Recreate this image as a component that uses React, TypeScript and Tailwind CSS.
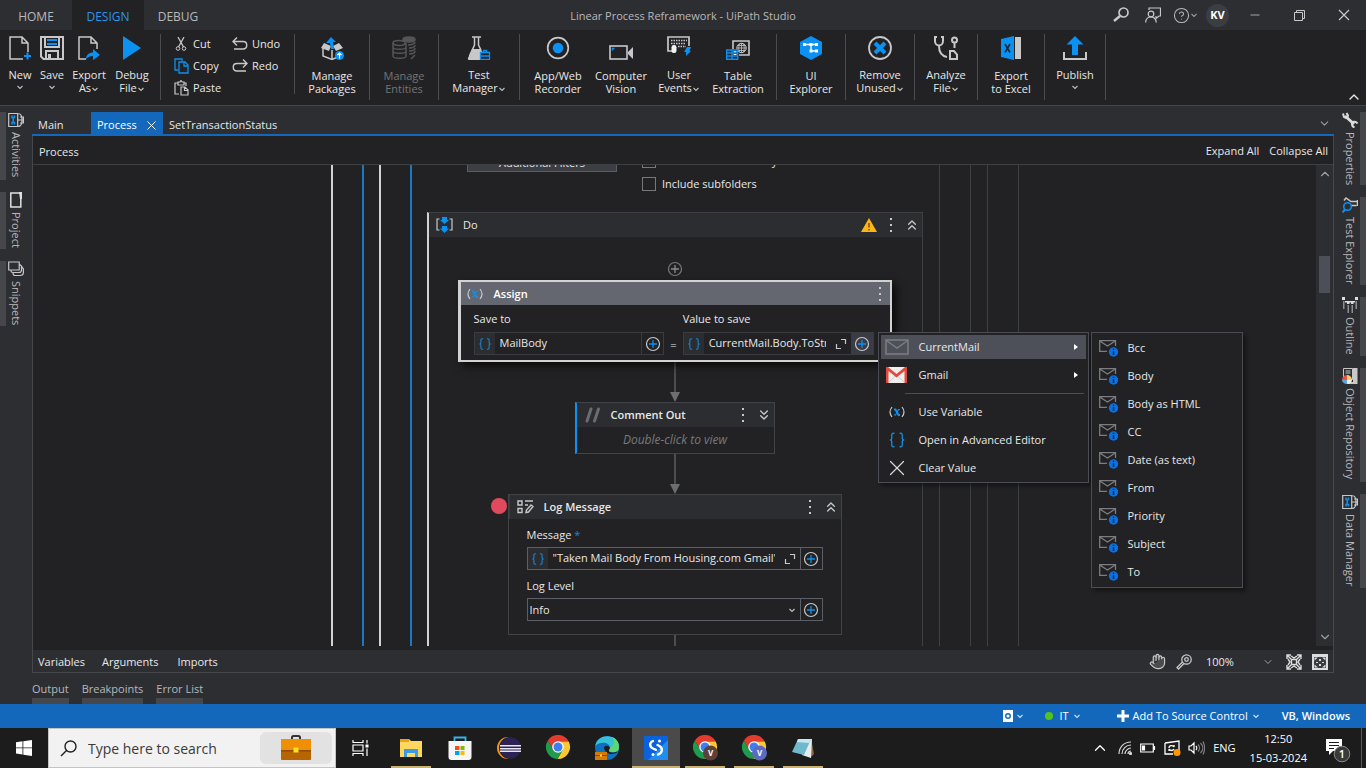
import React, { useState } from 'react';
import { Braces, ChevronDown, ChevronUp, ChevronsDown, ChevronsUp, CircleHelp, Hand, Minus, X } from 'lucide-react';

interface IconProps {
  className?: string;
}

const GREY = '#c8c8c8';
const BLUE = '#0a91f2';

/* ---------- Ribbon icons ---------- */

const NewIcon = () => (
  <svg width="24" height="24" viewBox="0 0 24 24" fill="none" stroke={GREY} strokeWidth="1.5">
    <path d="M15 23H2V1h12l6 6v9M14 1v6h6" />
    <path d="M19.5 16.500v7M16 20h7" stroke={BLUE} strokeWidth="2" />
  </svg>
);

const SaveIcon = () => (
  <svg width="24" height="24" viewBox="0 0 24 24" fill="none" stroke={GREY} strokeWidth="2">
    <path d="M1 1h22v22H3.500L1 20.500zM5 1v10h14V1M6 23v-8h12v8" />
    <path d="M9.500 18v5" strokeWidth="3" />
    <path d="M7 4h10M7 8h10" stroke={BLUE} />
  </svg>
);

const ExportAsIcon = () => (
  <svg width="24" height="24" viewBox="0 0 24 24" fill="none" stroke={GREY} strokeWidth="1.500">
    <path d="M9 23H2V1h12l6 6v6M14 1v6h6" />
    <path d="M9 23c0-4 3-6.500 7-6.500v-3.500l7 6-7 5v-4c-3 0-5 1-7 3z" fill={BLUE} stroke="none" />
  </svg>
);

const PlayIcon = () => (
  <svg width="24" height="24" viewBox="0 0 24 24">
    <path d="M3 0l18 12L3 24z" fill={BLUE} />
  </svg>
);

const CutIcon = () => (
  <svg width="14" height="14" viewBox="0 0 14 14" fill="none" stroke={GREY}>
    <path d="M4 0l5.500 10M10 0L4.500 10" strokeWidth="1.300" />
    <circle cx="4" cy="11.500" r="1.800" />
    <circle cx="10" cy="11.500" r="1.800" />
  </svg>
);

const CopyIcon = () => (
  <svg width="15" height="16" viewBox="0 0 15 16" fill="none" stroke={BLUE} strokeWidth="1.300">
    <path d="M4 12H1V1h7v2M5 4h6l3 3v8H5zM10 4v4h4" />
  </svg>
);

const PasteIcon = () => (
  <svg width="15" height="16" viewBox="0 0 15 16" fill="none" stroke={GREY} strokeWidth="1.200">
    <path d="M5 14H1V3h3M10 3h2v3M4 2h2l1-1.500L8 2h2v3H4z" />
    <path d="M7 7h4l3 3v5H7zM10.500 7v3.500H14" />
  </svg>
);

const UndoIcon = ({ className }: IconProps) => (
  <svg className={className} width="16" height="14" viewBox="0 0 16 14" fill="none" stroke={GREY} strokeWidth="1.400">
    <path d="M5 0.500L1 4.500l4 4M1 4.500h10c5 0 5 7.500 0 7.500H2" />
  </svg>
);

const PackagesIcon = () => (
  <svg width="24" height="24" viewBox="0 0 24 24">
    <path d="M3 12v8l9 3.500 7-3" fill="none" stroke={GREY} strokeWidth="1.500" />
    <path d="M12 14v9" stroke={GREY} strokeWidth="1.500" />
    <path d="M1 12l3-5 7 3-2 5zM23 12l-4-5-6 3 3 5z" fill={GREY} />
    <path d="M6 7l5-6 5 5h-3l1 7h-3L10 7z" fill={BLUE} />
    <circle cx="19.500" cy="19.500" r="4.500" fill={BLUE} />
    <path d="M19.500 22.500v-5.500M17.500 19l2-2 2 2" fill="none" stroke="#fff" strokeWidth="1.200" />
  </svg>
);

const EntitiesIcon = () => (
  <svg width="24" height="24" viewBox="0 0 24 24" fill="none" stroke="#555557" strokeWidth="1.500">
    <ellipse cx="17" cy="3.500" rx="6" ry="2.500" fill="#555557" />
    <path d="M23 6c0 2-4 3-7 3M23 9c0 2-3 3-6 3M23 12c0 2-3 3-6 3M23 15c0 2-3 3-6 3M19 23l4-4" />
    <ellipse cx="7" cy="7" rx="6" ry="2.500" />
    <path d="M1 7v13c0 3 13 3 13 0V7M1 11c0 3 13 3 13 0M1 15c0 3 13 3 13 0" />
  </svg>
);

const FlaskIcon = () => (
  <svg width="24" height="24" viewBox="0 0 24 24" fill="none">
    <path d="M5 1h9M7.500 1v8L2.500 20M11.500 1v8l2.500 5" stroke={GREY} strokeWidth="1.500" />
    <path d="M5 13h8l2 2v9H2c-1 0-1.500-1-1-2z" fill={GREY} />
    <path d="M13.500 16.500h9v7h-9zM13.500 20h9M16.500 16v-1.500h3V16" fill="#222224" stroke={BLUE} strokeWidth="1.300" />
  </svg>
);

const RecorderIcon = () => (
  <svg width="24" height="24" viewBox="0 0 24 24">
    <circle cx="12" cy="12" r="10.300" fill="none" stroke={GREY} strokeWidth="1.700" />
    <circle cx="12" cy="12" r="5.300" fill={BLUE} />
  </svg>
);

const CameraIcon = () => (
  <svg width="24" height="24" viewBox="0 0 24 24">
    <rect x="1" y="10" width="17" height="13" fill="none" stroke={GREY} strokeWidth="1.600" />
    <path d="M19 16l5-5v12l-5-5z" fill={GREY} />
    <path d="M3.500 14.500v-2h2" fill="none" stroke={BLUE} strokeWidth="1.500" />
  </svg>
);

const UserEventsIcon = () => (
  <svg width="24" height="24" viewBox="0 0 24 24">
    <path d="M5 15H1V1h21v9" fill="none" stroke={GREY} strokeWidth="1.700" />
    <path d="M4 4.500h16M4 7.500h14M11 10.500h8" stroke={GREY} strokeWidth="1.300" strokeDasharray="1.500 1" />
    <rect x="4.500" y="9" width="5" height="8" rx="2.300" fill="#f2f2f2" />
    <path d="M20 11h4l-1.500 4H24l-5 5v-4h-2z" fill={BLUE} />
  </svg>
);

const TableExtractionIcon = () => (
  <svg width="24" height="24" viewBox="0 0 24 24" fill="none">
    <path d="M7 13V5h16v14H13M7 5h16" stroke={GREY} strokeWidth="1.600" />
    <circle cx="15.500" cy="12" r="4.700" stroke={GREY} />
    <path d="M11 12h9M15.500 7v10M12 9.500h7M12 14.500h7M13.500 8c-1 3-1 5 0 8M17.500 8c1 3 1 5 0 8" stroke={GREY} strokeWidth="0.800" />
    <path d="M0.700 14h11v9.300H.7zM.7 17h11M.7 20h11M6 14v9" fill="#222224" stroke={BLUE} strokeWidth="1.400" />
    <path d="M7.500 15.700h3M7.500 18.500h3" stroke="#fff" />
  </svg>
);

const ExplorerIcon = () => (
  <svg width="24" height="24" viewBox="0 0 24 24">
    <path d="M12 0l11 6v12l-11 6-11-6V6z" fill={BLUE} />
    <path d="M5 8.500h12M12 8.500v6.500h5" fill="none" stroke="#fff" strokeWidth="1.300" />
    <path d="M4 7h3v3H4zM10.500 7h3v3h-3zM16 7h3v3h-3zM16 13.500h3v3h-3zM10.500 13.500h3v3h-3z" fill="#fff" />
  </svg>
);

const RemoveIcon = () => (
  <svg width="24" height="24" viewBox="0 0 24 24" fill="none">
    <circle cx="12" cy="12" r="11" stroke={GREY} strokeWidth="1.800" />
    <path d="M7 7l10 10M17 7L7 17" stroke={BLUE} strokeWidth="4" />
  </svg>
);

const AnalyzeIcon = () => (
  <svg width="24" height="24" viewBox="0 0 24 24" fill="none" stroke={GREY} strokeWidth="2">
    <path d="M3 1H1v4c0 6 8 6 8 0V1H7M5 10c0 6 3 10 8 11M20.500 7v5" />
    <circle cx="20.500" cy="4" r="2.500" />
    <path d="M16 15h4l3 3.500V23h-7z" />
  </svg>
);

const ExcelIcon = () => (
  <svg width="24" height="24" viewBox="0 0 24 24">
    <path d="M2 3l13-3v24L2 21z" fill={BLUE} />
    <path d="M16 1h6v22h-6z" fill={GREY} />
    <path d="M6 8l5 8.500M11 8l-5 8.500" stroke="#1d2a38" strokeWidth="1.700" />
  </svg>
);

const PublishIcon = () => (
  <svg width="24" height="24" viewBox="0 0 24 24">
    <path d="M12 0l8.500 8.500H15V19H9V8.500H3.500z" fill={BLUE} />
    <path d="M1 16v7h22v-7" fill="none" stroke={GREY} strokeWidth="2" />
  </svg>
);

/* ---------- Ribbon ---------- */

interface RibbonButtonProps {
  icon: React.ReactNode;
  lines: string[];
  menu?: boolean;
  disabled?: boolean;
  className?: string;
}

const SmallChevron = ({ className }: IconProps) => (
  <svg className={`inline-block opacity-80 ${className ?? ''}`} width="8" height="8" viewBox="0 0 8 8" fill="none" stroke="currentColor" strokeWidth="1.100">
    <path d="M1.500 3L4 5.500 6.500 3" />
  </svg>
);

const RibbonButton = ({ icon, lines, menu, disabled, className }: RibbonButtonProps) => (
  <button
    type="button"
    disabled={disabled}
    className={`flex flex-col items-center pt-0.5 leading-[13px] ${menu ? 'gap-2' : 'gap-[9px]'} ${
      disabled ? 'text-[#747476]' : 'text-[#e8e8e8]'
    } ${className ?? 'w-full'}`}
  >
    {icon}
    <span className="flex flex-col items-center whitespace-nowrap">
      {lines.map((line, i) => (
        <span key={line}>
          {line}
          {menu && i === 1 && <SmallChevron />}
        </span>
      ))}
      {menu && lines.length === 1 && <SmallChevron className="mt-0.5" />}
    </span>
  </button>
);

const EditButton = ({ icon, label }: { icon: React.ReactNode; label: string }) => (
  <button type="button" className="flex h-[22px] shrink-0 items-center gap-1 pb-0.5">
    <span className="flex w-4 justify-center">{icon}</span>
    {label}
  </button>
);

const Ribbon = () => (
  <div className="flex h-[76px] shrink-0 border-b border-[#46474b] bg-[#222224] pt-1 text-[#e8e8e8]">
    <div className="flex h-[66px] border-r border-[#4b4c50] pl-1 pr-1.5">
      <RibbonButton className="w-8" icon={<NewIcon />} lines={['New']} menu />
      <RibbonButton className="w-8" icon={<SaveIcon />} lines={['Save']} menu />
      <RibbonButton className="w-[42px]" icon={<ExportAsIcon />} lines={['Export', 'As']} menu />
      <RibbonButton className="w-11" icon={<PlayIcon />} lines={['Debug', 'File']} menu />
    </div>
    <div className="flex h-[60px] w-[134px] gap-[11px] border-r border-[#4b4c50] pl-3">
      <div className="flex flex-col">
        <EditButton icon={<CutIcon />} label="Cut" />
        <EditButton icon={<CopyIcon />} label="Copy" />
        <EditButton icon={<PasteIcon />} label="Paste" />
      </div>
      <div className="flex flex-col">
        <EditButton icon={<UndoIcon />} label="Undo" />
        <EditButton icon={<UndoIcon className="-scale-x-100" />} label="Redo" />
      </div>
    </div>
    <div className="h-[66px] w-[75px] border-r border-[#4b4c50]">
      <RibbonButton icon={<PackagesIcon />} lines={['Manage', 'Packages']} />
    </div>
    <div className="h-[66px] w-[69px] border-r border-[#4b4c50]">
      <RibbonButton icon={<EntitiesIcon />} lines={['Manage', 'Entities']} disabled />
    </div>
    <div className="h-[66px] w-[81px] border-r border-[#4b4c50]">
      <RibbonButton icon={<FlaskIcon />} lines={['Test', 'Manager']} menu />
    </div>
    <div className="flex h-[66px] w-[257px] border-r border-[#4b4c50] pl-1.5">
      <RibbonButton className="w-16" icon={<RecorderIcon />} lines={['App/Web', 'Recorder']} />
      <RibbonButton className="w-[62px]" icon={<CameraIcon />} lines={['Computer', 'Vision']} />
      <RibbonButton className="w-[54px]" icon={<UserEventsIcon />} lines={['User', 'Events']} menu />
      <RibbonButton className="w-16" icon={<TableExtractionIcon />} lines={['Table', 'Extraction']} />
    </div>
    <div className="h-[66px] w-[69px] border-r border-[#4b4c50]">
      <RibbonButton icon={<ExplorerIcon />} lines={['UI', 'Explorer']} />
    </div>
    <div className="h-[66px] w-[69px] border-r border-[#4b4c50]">
      <RibbonButton icon={<RemoveIcon />} lines={['Remove', 'Unused']} menu />
    </div>
    <div className="h-[66px] w-[63px] border-r border-[#4b4c50]">
      <RibbonButton icon={<AnalyzeIcon />} lines={['Analyze', 'File']} menu />
    </div>
    <div className="h-[66px] w-[67px] border-r border-[#4b4c50]">
      <RibbonButton icon={<ExcelIcon />} lines={['Export', 'to Excel']} />
    </div>
    <div className="h-[66px] w-[61px] border-r border-[#4b4c50]">
      <RibbonButton icon={<PublishIcon />} lines={['Publish']} menu />
    </div>
    <button type="button" aria-label="Collapse ribbon" className="ml-auto mr-1 self-end">
      <ChevronUp size={16} strokeWidth={2} />
    </button>
  </div>
);

/* ---------- Title bar ---------- */

const SearchIcon = ({ className }: IconProps) => (
  <svg className={className} width="16" height="16" viewBox="0 0 16 16" fill="none" stroke={GREY}>
    <circle cx="10.500" cy="5.500" r="4.500" strokeWidth="1.700" />
    <path d="M7 9l-6 5" strokeWidth="2.500" />
  </svg>
);

const FeedbackIcon = () => (
  <svg width="16" height="16" viewBox="0 0 16 16" fill="none" stroke={GREY} strokeWidth="1.200">
    <path d="M4 3V1h11.500v8H14l-3 2.500V9" />
    <circle cx="6" cy="7" r="2.800" />
    <path d="M0.700 15.500c0-7.500 10.500-7.500 10.500 0" />
  </svg>
);

const TitleBar = () => {
  const [tab, setTab] = useState('DESIGN');
  return (
    <header className="grid h-[30px] shrink-0 grid-cols-[1fr_auto_1fr] items-center text-[#b8b8ba]">
      <nav className="flex h-full text-xs">
        {['HOME', 'DESIGN', 'DEBUG'].map((item) => (
          <button
            key={item}
            type="button"
            onClick={() => setTab(item)}
            className={`w-[72px] pt-1 ${tab === item ? 'bg-[#222224] text-[#2b95ea]' : ''} ${
              item === 'DEBUG' ? 'pr-1' : ''
            }`}
          >
            {item}
          </button>
        ))}
      </nav>
      <h1 className="pt-0.5">Linear Process Reframework - UiPath Studio</h1>
      <div className="flex h-full items-center justify-end pr-4">
        <button type="button" aria-label="Search" className="mr-4"><SearchIcon /></button>
        <button type="button" aria-label="Feedback" className="mr-3"><FeedbackIcon /></button>
        <button type="button" aria-label="Help" className="mr-2 flex items-center">
          <CircleHelp size={17} strokeWidth={1.500} />
          <SmallChevron />
        </button>
        <button type="button" className="h-[23px] w-[23px] rounded-full bg-[#3a3d42] font-bold text-white">KV</button>
        <button type="button" aria-label="Minimize" className="ml-[19px]"><Minus size={14} strokeWidth={1.500} /></button>
        <button type="button" aria-label="Restore" className="ml-8">
          <svg width="11" height="11" viewBox="0 0 11 11" fill="none" stroke={GREY}>
            <path d="M.5 2.500h8v8h-8zM2.500 2.500v-2h8v8h-2" />
          </svg>
        </button>
        <button type="button" aria-label="Close" className="ml-[33px]">
          <svg width="12" height="12" viewBox="0 0 12 12" stroke={GREY} strokeWidth="1.200">
            <path d="M1 1l10 10M11 1L1 11" />
          </svg>
        </button>
      </div>
    </header>
  );
};

/* ---------- Side rails ---------- */

const ToolboxIcon = () => (
  <svg width="16" height="16" viewBox="0 0 16 16" fill="none" stroke={GREY} strokeWidth="1.200">
    <path d="M.7 1.500h9v13h-9zM10 1.500c3 0 4 2 4 6.500s-1 6.500-4 6.500M12 5h3.400v6H12M10 8h5" />
    <path d="M4 3.500v2h2.500v-2M5.200 5v6M4 12.500v-2h2.500v2" stroke={BLUE} strokeWidth="1.500" />
  </svg>
);

const ProjectIcon = () => (
  <svg width="14" height="16" viewBox="0 0 14 16">
    <path d="M1.800 1h10v14h-10z" fill="none" stroke="#e0e0e0" strokeWidth="1.500" />
    <path d="M10 0h3v7h-2z" fill="#e0e0e0" />
  </svg>
);

const SnippetsIcon = () => (
  <svg width="16" height="16" viewBox="0 0 16 16" fill="none" stroke={GREY} strokeWidth="1.200">
    <path d="M.7 1h10.500v8H.7zM3 9v1c0 1 1 1.500 2 1.500h6c2 0 2.500-1 2.500-2.500V5L11 3M5 12c0 2 1 2.500 2 2.500h5c2 0 3.400-1 3.400-3V8l-2-3" />
  </svg>
);

const WrenchIcon = () => (
  <svg width="16" height="16" viewBox="0 0 16 16" fill="none" stroke="#dcdcdc">
    <path d="M3 4l9 8" strokeWidth="3" />
    <path d="M1 1.500L2 5c2 1.500 4 .5 4-1.500L4.500 1M15.500 11.500c-2-3-6-2-5.500 1 .2 1.500 1 2.500 2.500 2.800" strokeWidth="2" />
  </svg>
);

const TestExplorerIcon = () => (
  <svg width="16" height="16" viewBox="0 0 16 16" fill="none">
    <path d="M2 3.500L4 1l5 3.500h6.500M15.500 3v6M9 8.500h5.500" stroke={GREY} strokeWidth="1.500" />
    <circle cx="5.500" cy="9.500" r="3.800" stroke={BLUE} strokeWidth="1.600" />
    <path d="M3 12.500L.5 15.500" stroke={BLUE} strokeWidth="2" />
  </svg>
);

const OutlineIcon = () => (
  <svg width="16" height="16" viewBox="0 0 16 16">
    <path d="M0 0h3v3H0zM13 0h3v3h-3zM5 4h2.500v3H5zM9 4h2.500v3H9zM3 4h10v1.500H3z" fill="#dedede" />
    <path d="M1 4h1.500v8H1zM5.500 8H7v8H5.500zM9.500 8H11v8H9.500zM13.500 4H15v8h-1.500z" fill="#8d8e90" />
  </svg>
);

const RepositoryIcon = () => (
  <svg width="16" height="16" viewBox="0 0 16 16">
    <path d="M1.500.5h9v11h-9z" fill="none" stroke={GREY} />
    <path d="M11 0h4.500v16H6v-2h5z" fill={GREY} />
    <path d="M3.500 3h5M3.500 5h5" stroke={GREY} />
    <path d="M0 12a5 5 0 0 1 5-5v5z" fill="#e8543f" />
    <path d="M5 7a5 5 0 0 1 5 5H5z" fill="#f5cf72" />
    <path d="M0 12a5 4 0 0 0 5 4v-4z" fill="#5fa8dd" />
    <path d="M5 12h5a5 4 0 0 1-5 4z" fill="#f4efe4" />
  </svg>
);

interface RailTab {
  name: string;
  icon: React.ReactNode;
  height: string;
}

const leftTabs: RailTab[] = [
  { name: 'Activities', icon: <ToolboxIcon />, height: 'min-h-[68px]' },
  { name: 'Project', icon: <ProjectIcon />, height: 'min-h-[57px]' },
  { name: 'Snippets', icon: <SnippetsIcon />, height: 'min-h-[65px]' },
];

const rightTabs: RailTab[] = [
  { name: 'Properties', icon: <WrenchIcon />, height: 'min-h-[73px]' },
  { name: 'Test Explorer', icon: <TestExplorerIcon />, height: 'min-h-[86px]' },
  { name: 'Outline', icon: <OutlineIcon />, height: 'min-h-[59px]' },
  { name: 'Object Repository', icon: <RepositoryIcon />, height: 'min-h-[114px]' },
  { name: 'Data Manager', icon: <ToolboxIcon />, height: 'min-h-[94px]' },
];

const Rail = ({ tabs, side }: { tabs: RailTab[]; side: 'left' | 'right' }) => (
  <aside className={`flex w-8 shrink-0 flex-col gap-3 pt-1.5 ${side === 'right' ? 'items-end' : 'items-start'}`}>
    {tabs.map((tab) => (
      <button
        key={tab.name}
        type="button"
        className={`flex w-[26px] flex-col items-center gap-1 border-[#45474b] text-[#b8b8ba] ${tab.height} ${
          side === 'right' ? 'border-r-[6px]' : 'border-l-[6px]'
        }`}
      >
        {tab.icon}
        <span className="whitespace-nowrap leading-4 [writing-mode:vertical-rl]">{tab.name}</span>
      </button>
    ))}
  </aside>
);

/* ---------- Activity cards ---------- */

const VariableIcon = ({ className }: IconProps) => (
  <svg className={className} width="16" height="16" viewBox="0 0 16 16" fill="none">
    <path d="M3 3Q-1 8 3 13M13 3q4 5 0 10" stroke={GREY} strokeWidth="1.200" />
    <path d="M5 5.500l1.500 0 3 5.500H11" stroke={BLUE} strokeWidth="1.800" />
    <path d="M11 5.500l-1.500 0-3 5.500H5" stroke={BLUE} strokeWidth="1.200" />
  </svg>
);

const Dots = () => (
  <svg width="4" height="16" viewBox="0 0 4 16" fill={GREY}>
    <path d="M1 1h2v2H1zM1 7h2v2H1zM1 13h2v2H1z" />
  </svg>
);

const CirclePlusIcon = ({ plus = BLUE, ring = GREY }: { plus?: string; ring?: string }) => (
  <svg width="16" height="16" viewBox="0 0 16 16" fill="none">
    <circle cx="8" cy="8" r="6.500" stroke={ring} strokeWidth="1.200" />
    <path d="M8 4v8M4 8h8" stroke={plus} strokeWidth="1.300" />
  </svg>
);

const ExpandIcon = () => (
  <svg width="12" height="12" viewBox="0 0 12 12" fill="none" stroke={GREY} strokeWidth="1.200">
    <path d="M6 1.500h4.500V6M1.500 6v4.500H6" />
  </svg>
);

const SequenceIcon = () => (
  <svg width="17" height="16" viewBox="0 0 17 16">
    <path d="M3.500 2H1v11h2.500M13.500 2H16v11h-2.500" fill="none" stroke={GREY} strokeWidth="1.200" />
    <path d="M6 0h5v3h2L8.500 7 4 3h2zM6 9h5v2.500h2L8.500 16 4 11.500h2z" fill={BLUE} />
  </svg>
);

const WarningIcon = () => (
  <svg width="16" height="14" viewBox="0 0 16 14">
    <path d="M8 0l8 14H0z" fill="#fdb515" />
    <path d="M8 5v4.500M8 11v1.500" stroke="#5b4a20" strokeWidth="1.300" />
  </svg>
);

const LogIcon = () => (
  <svg width="17" height="14" viewBox="0 0 17 14" fill="none" stroke={GREY} strokeWidth="1.400">
    <path d="M1 1h4v4H1zM1 8.500h4v4H1zM8 1h8M8 5h3M9 12.500l.500-2.500L14 5l2 1.500-4.500 5.500z" />
  </svg>
);

interface ExpressionFieldProps {
  id: string;
  value: string;
  border: string;
  expandable?: boolean;
  hot?: boolean;
}

const ExpressionField = ({ id, value, border, expandable, hot }: ExpressionFieldProps) => (
  <div className={`flex h-[23px] border bg-[#222224] ${border}`}>
    <span className="flex w-5 shrink-0 items-center justify-center bg-[#2c2d30]">
      <Braces size={14} strokeWidth={1.800} color="#1b86d6" />
    </span>
    <input
      id={id}
      defaultValue={value}
      className="ml-[5px] min-w-0 flex-1 bg-transparent pb-px text-[#e8e8e8] outline-none"
    />
    {expandable && (
      <button type="button" aria-label="Expand editor" className="ml-[9px] mr-1">
        <ExpandIcon />
      </button>
    )}
    <button
      type="button"
      aria-label="Plus menu"
      className={`flex w-[22px] shrink-0 items-center justify-center border-l ${border} ${hot ? 'bg-[#3a3c45]' : ''}`}
    >
      <CirclePlusIcon />
    </button>
  </div>
);

const Connector = ({ height }: { height: string }) => (
  <div className={`flex flex-col items-center ${height}`}>
    <span className="w-0.5 flex-1 bg-[#4c4d4f]" />
    <svg width="10" height="10" viewBox="0 0 10 10" fill="#6d6e70">
      <path d="M0 0h10L5 10z" />
    </svg>
  </div>
);

/* ---------- Plus menu ---------- */

const MailIcon = () => (
  <svg width="24" height="16" viewBox="0 0 24 16" fill="none" stroke="#7b7d81" strokeWidth="1.500">
    <path d="M1 1h22v14H1zM2 2l10 7 10-7" />
  </svg>
);

const GmailIcon = () => (
  <svg width="21" height="16" viewBox="0 0 21 16">
    <path d="M0 0h21v16H0z" fill="#eeeeee" />
    <path d="M3 15l7.500-7 7.500 7" fill="none" stroke="#cfcfcf" />
    <path d="M0 0h2l8.500 7L19 0h2v16h-2.500V4l-8 6.500L2.500 4v12H0z" fill="#e04a3c" />
  </svg>
);

const MailInfoIcon = () => (
  <svg width="20" height="17" viewBox="0 0 20 17" fill="none">
    <path d="M16.500 6V.7H.7v10.600H8M1.500 1.500l7 4.500 7-4.500" stroke="#7b7d81" strokeWidth="1.300" />
    <circle cx="14.500" cy="12" r="4.700" fill="#0c70e2" />
    <path d="M14.500 11v4M14.500 8.800v1.200" stroke="#10263f" strokeWidth="1.400" />
  </svg>
);

const mailFields = ['Bcc', 'Body', 'Body as HTML', 'CC', 'Date (as text)', 'From', 'Priority', 'Subject', 'To'];

const MenuRow = ({ icon, label, sub, active }: { icon: React.ReactNode; label: string; sub?: boolean; active?: boolean }) => (
  <button
    type="button"
    className={`flex h-6 w-full items-center pr-2 text-left ${active ? 'bg-[#4d5059]' : 'hover:bg-[#4d5059]'}`}
  >
    <span className="flex w-8 justify-center">{icon}</span>
    <span className="ml-1.5 flex-1 whitespace-nowrap">{label}</span>
    {sub && (
      <svg width="5" height="8" viewBox="0 0 5 8" fill="#fff">
        <path d="M1 1l4 3-4 3z" />
      </svg>
    )}
  </button>
);

const PlusMenu = () => (
  <div className="absolute left-[417px] top-[50px] z-10 flex items-start gap-0.5 font-normal text-[#e8e8e8]">
    <div className="flex w-[211px] flex-col gap-1 border border-[#4b4d54] bg-[#222224] p-0.5 shadow-[3px_3px_4px_rgba(0,0,0,0.4)]">
      <MenuRow icon={<MailIcon />} label="CurrentMail" sub active />
      <MenuRow icon={<GmailIcon />} label="Gmail" sub />
      <hr className="my-0.5 ml-6 mr-0.5 border-[#4b4d54]" />
      <MenuRow icon={<VariableIcon />} label="Use Variable" />
      <MenuRow icon={<Braces size={18} strokeWidth={1.800} color="#1b86d6" />} label="Open in Advanced Editor" />
      <MenuRow icon={<X size={26} strokeWidth={1.100} color="#d8d8d8" />} label="Clear Value" />
    </div>
    <div className="flex w-[152px] flex-col border border-[#4b4d54] bg-[#222224] py-px shadow-[3px_3px_4px_rgba(0,0,0,0.4)]">
      {mailFields.map((field) => (
        <button key={field} type="button" className="flex h-7 items-center gap-[9px] pl-[7px] text-left hover:bg-[#4d5059]">
          <MailInfoIcon />
          {field}
        </button>
      ))}
    </div>
  </div>
);

const AssignCard = () => (
  <section className="relative w-[434px] border-2 border-l-[3px] border-[#d2d2d2] bg-[#222224] shadow-[4px_4px_8px_rgba(0,0,0,0.7)]">
    <div className="flex h-[23px] items-center bg-[#646770] pl-1.5 pr-2 text-white">
      <VariableIcon />
      <h3 className="ml-[11px] flex-1 font-semibold">Assign</h3>
      <Dots />
    </div>
    <div className="flex h-[55px] items-end gap-1.5 pb-[5px] pl-[13px] pr-4">
      <div className="flex min-w-0 flex-1 flex-col gap-[5px]">
        <label htmlFor="save-to" className="leading-4">Save to</label>
        <ExpressionField id="save-to" value="MailBody" border="border-[#3b3c40]" />
      </div>
      <span className="pb-0.5 leading-4">=</span>
      <div className="flex min-w-0 flex-1 flex-col gap-[5px]">
        <label htmlFor="value-to-save" className="leading-4">Value to save</label>
        <ExpressionField id="value-to-save" value="CurrentMail.Body.ToString" border="border-[#3b3c40]" expandable hot />
      </div>
    </div>
    <PlusMenu />
  </section>
);

const CommentOutCard = () => (
  <section className="w-[200px] border border-l-2 border-[#424347] border-l-[#0a91f2]">
    <div className="flex h-6 items-center bg-[#2c2d30] pl-2 pr-0.5">
      <svg width="16" height="16" viewBox="0 0 16 16" stroke="#6b6c6e" strokeWidth="3" strokeLinecap="round">
        <path d="M2 14L6 2M9.500 14l4-12" />
      </svg>
      <h3 className="ml-[10px] flex-1 font-semibold">Comment Out</h3>
      <Dots />
      <ChevronsDown size={16} strokeWidth={2} className="ml-[11px]" color={GREY} />
    </div>
    <p className="py-1 text-center text-xs italic leading-[18px] text-[#78797b]">Double-click to view</p>
  </section>
);

const LogMessageCard = () => (
  <section className="relative w-[334px] border border-[#424347] bg-[#222224]">
    <span className="absolute -left-[18px] top-[3px] h-4 w-4 rounded-full bg-[#e04a5f]" />
    <div className="flex h-6 items-center border-l border-[#00489a] bg-[#2c2d30] pl-[7px] pr-0.5">
      <LogIcon />
      <h3 className="ml-[10px] flex-1 font-semibold">Log Message</h3>
      <Dots />
      <ChevronsUp size={16} strokeWidth={2} className="ml-[11px]" color={GREY} />
    </div>
    <div className="flex flex-col px-[18px] pb-[13px] pt-2">
      <label htmlFor="message" className="mb-1 leading-4">
        Message <span className="text-[#1b86d6]">*</span>
      </label>
      <ExpressionField id="message" value={'"Taken Mail Body From Housing.com Gmail"'} border="border-[#5c5e66]" expandable />
      <label htmlFor="log-level" className="mb-1 mt-2 leading-4">Log Level</label>
      <div className="flex h-[23px] border border-[#5c5e66]">
        <select id="log-level" defaultValue="Info" className="min-w-0 flex-1 appearance-none bg-transparent pl-0.5 outline-none">
          <option>Info</option>
          <option>Warn</option>
          <option>Error</option>
        </select>
        <SmallChevron className="mr-1 self-center" />
        <button type="button" aria-label="Plus menu" className="flex w-[22px] items-center justify-center border-l border-[#5c5e66]">
          <CirclePlusIcon />
        </button>
      </div>
    </div>
  </section>
);

const DoSequence = () => (
  <section className="flex min-h-[600px] flex-col border-l-2 border-r border-t border-[#3f4043] border-l-[#d2d2d2]">
    <div className="flex h-6 items-center bg-[#2c2d30] pl-[7px] pr-0.5">
      <SequenceIcon />
      <h3 className="ml-[10px] flex-1 font-medium">Do</h3>
      <WarningIcon />
      <span className="ml-3"><Dots /></span>
      <ChevronsUp size={16} strokeWidth={2} className="ml-[11px]" color={GREY} />
    </div>
    <div className="flex flex-col items-center pr-0.5">
      <button type="button" aria-label="Add activity" className="mb-1 mt-6 h-[15px]">
        <CirclePlusIcon plus="#8a8b8d" ring="#77787a" />
      </button>
      <AssignCard />
      <Connector height="h-10" />
      <CommentOutCard />
      <Connector height="h-10" />
      <LogMessageCard />
      <span className="h-8 w-0.5 bg-[#4c4d4f]" />
    </div>
  </section>
);

/* ---------- Designer ---------- */

const Canvas = () => (
  <div className="mb-1 flex min-h-0 flex-1">
    <div className="flex min-w-0 flex-1 justify-center overflow-hidden pl-px">
      {/* enclosing sequences, seen only as their side borders */}
      <div className="h-max w-[688px] shrink-0 border-l-2 border-r border-[#3f4043] border-l-[#d2d2d2] pl-[29px] pr-[30px]">
        <div className="border-l-2 border-r border-[#3f4043] border-l-[#1b78c4] pl-[15px] pr-4">
          <div className="border-l-2 border-r border-[#3f4043] border-l-[#d2d2d2] pl-[29px] pr-[30px]">
            <div className="border-l-2 border-r border-[#3f4043] border-l-[#1b78c4] pl-[15px] pr-4">
              <div className="-mt-4 mb-[21px] flex items-start gap-[25px] pl-10">
                <button type="button" className="h-[23px] w-[150px] border border-[#5c5e66] bg-[#3c3e43] pt-1 leading-4">
                  Additional Filters
                </button>
                <div className="flex flex-col gap-[9px] pt-[5px] leading-[14px]">
                  <label className="flex items-center gap-1.5">
                    <input type="checkbox" className="h-[14px] w-[14px] appearance-none border border-[#77787a]" />
                    With attachments only
                  </label>
                  <label className="flex items-center gap-1.5">
                    <input type="checkbox" className="h-[14px] w-[14px] appearance-none border border-[#77787a]" />
                    Include subfolders
                  </label>
                </div>
              </div>
              <DoSequence />
            </div>
          </div>
        </div>
      </div>
    </div>
    <div className="flex w-[17px] shrink-0 flex-col items-center bg-[#2d2e32] py-0.5 text-[#9c9da0]">
      <ChevronUp size={14} strokeWidth={2} />
      <span className="mt-[75px] h-[37px] w-[11px] bg-[#4d4f58]" />
      <ChevronDown size={14} strokeWidth={2} className="mt-auto" />
    </div>
  </div>
);

const FitIcon = () => (
  <svg width="16" height="16" viewBox="0 0 16 16" fill="none" stroke="#dcdcdc" strokeWidth="1.400">
    <path d="M1 5V1h4M11 1h4v4M15 11v4h-4M5 15H1v-4M5.500 5.500h5v5h-5zM1 1l4.500 4.500M15 1l-4.500 4.500M1 15l4.500-4.500M15 15l-4.500-4.500M5 2l3 2 3-2M5 14l3-2 3 2M2 5l2 3-2 3M14 5l-2 3 2 3" />
  </svg>
);

const OverviewIcon = () => (
  <svg width="16" height="16" viewBox="0 0 16 16">
    <path d="M0 0h16v16H0z" fill="#dcdcdc" />
    <path d="M2 3h12v11H2z" fill="#3a3b3f" />
    <path d="M2.500 3.500H6l-3.500 3zM13.500 3.500H10l3.500 3zM2.500 13.500H6l-3.500-3zM13.500 13.500H10l3.500-3zM7 5h2v2H7zM7 10h2v2H7zM4 8h2v1H4zM10 8h2v1h-2z" fill="#dcdcdc" />
  </svg>
);

const ZoomIcon = () => (
  <svg width="16" height="16" viewBox="0 0 16 16" fill="none" stroke={GREY} strokeWidth="1.300">
    <circle cx="10.500" cy="5.500" r="4.700" />
    <circle cx="10.500" cy="5.500" r="1.800" />
    <path d="M6.500 8L1 13.500 2.500 15 8 9.500" />
  </svg>
);

const Designer = () => (
  <main className="flex min-w-0 flex-1 flex-col text-[#e8e8e8]">
    <div className="flex h-[30px] shrink-0 items-stretch border-b-2 border-[#1468bb] pt-1.5">
      <button type="button" className="w-[59px] pl-1.5 pt-1 text-left">Main</button>
      <div className="flex w-[72px] items-center bg-[#1468bb] pl-1.5 pt-1 text-white">
        <button type="button" className="flex-1 text-left">Process</button>
        <button type="button" aria-label="Close Process" className="mr-1"><X size={15} strokeWidth={1.500} /></button>
      </div>
      <button type="button" className="pl-1.5 pt-1">SetTransactionStatus</button>
      <button type="button" aria-label="Open files" className="ml-auto mr-[3px] text-[#9c9da0]"><ChevronDown size={13} /></button>
    </div>
    <div className="flex min-h-0 flex-1 flex-col border border-t-0 border-[#46474b] bg-[#222224]">
      <div className="flex h-[29px] shrink-0 items-center border-b border-[#3f4043] pl-1.5 pr-[5px] pt-0.5">
        <span className="flex-1 pt-0.5">Process</span>
        <button type="button" className="mr-[10px]">Expand All</button>
        <button type="button">Collapse All</button>
      </div>
      <Canvas />
      <div className="flex h-[22px] shrink-0 items-center bg-[#2d2e32] pl-[5px] pr-[5px] pt-px">
        <button type="button" className="mr-[17px]">Variables</button>
        <button type="button" className="mr-[19px]">Arguments</button>
        <button type="button" className="mr-auto">Imports</button>
        <button type="button" aria-label="Pan"><Hand size={17} strokeWidth={1.700} color={GREY} fill="#4a4b4e" /></button>
        <button type="button" aria-label="Zoom" className="ml-[10px]"><ZoomIcon /></button>
        <select aria-label="Zoom level" defaultValue="100%" className="ml-[14px] w-14 appearance-none bg-transparent outline-none">
          <option>100%</option>
          <option>50%</option>
        </select>
        <ChevronDown size={12} color="#9c9da0" />
        <button type="button" aria-label="Fit to screen" className="ml-3"><FitIcon /></button>
        <button type="button" aria-label="Overview" className="ml-[10px]"><OverviewIcon /></button>
      </div>
    </div>
  </main>
);

/* ---------- Bottom bars ---------- */

const StatusBar = () => (
  <footer className="flex h-6 shrink-0 items-center justify-end bg-[#1468bb] pr-4 text-white">
    <button type="button" aria-label="Robot" className="flex items-center gap-[3px]">
      <svg width="10" height="12" viewBox="0 0 10 12">
        <path d="M0 0h10v12H0z" fill="#fff" />
        <circle cx="5" cy="6" r="2.300" fill="none" stroke="#1468bb" strokeWidth="1.400" />
      </svg>
      <SmallChevron />
    </button>
    <button type="button" className="ml-[21px] flex items-center gap-1">
      <span className="mr-0.5 h-2 w-2 rounded-full bg-[#52c41a]" />
      IT
      <SmallChevron />
    </button>
    <button type="button" className="ml-9 flex items-center gap-1">
      <svg width="12" height="12" viewBox="0 0 12 12" stroke="#fff" strokeWidth="3">
        <path d="M6 0v12M0 6h12" />
      </svg>
      Add To Source Control
      <SmallChevron />
    </button>
    <span className="ml-[22px] font-semibold">VB, Windows</span>
  </footer>
);

const ExplorerAppIcon = () => (
  <svg width="24" height="24" viewBox="0 0 24 24">
    <path d="M1 3h9l2 2h11v16H1z" fill="#ffd75e" />
    <path d="M1 3h9v3H1z" fill="#e8a317" />
    <path d="M5 13h14v8h-3v-4H8v4H5z" fill="#3d9be0" />
  </svg>
);

const StoreIcon = () => (
  <svg width="24" height="24" viewBox="0 0 24 24">
    <path d="M6.500 6V1.500h11V6" fill="none" stroke="#37b4ee" strokeWidth="1.800" />
    <path d="M.5 5h23v16a3 3 0 0 1-3 3h-17a3 3 0 0 1-3-3z" fill="#f6f6f6" />
    <path d="M7 10h4.500v4H7z" fill="#f25022" />
    <path d="M12.500 10h4v4h-4z" fill="#7fba00" />
    <path d="M7 15h4.500v4H7z" fill="#00a4ef" />
    <path d="M12.500 15h4v4h-4z" fill="#ffb900" />
  </svg>
);

const EclipseIcon = () => (
  <svg width="24" height="24" viewBox="0 0 24 24">
    <circle cx="11" cy="12" r="11" fill="#f7941e" />
    <circle cx="13" cy="12" r="11" fill="#1e1e1e" />
    <circle cx="13.500" cy="12" r="10.500" fill="#2c2255" />
    <path d="M3 9h21v1.500H3zM3 12h21v1.500H3zM3 14.500h21V16H3z" fill="#e9e6f5" />
  </svg>
);

const ChromeIcon = ({ badge, color }: { badge?: string; color?: string }) => (
  <svg width="26" height="26" viewBox="-1 0 26 26">
    <path d="M1.900 5.500A12 12 0 0 1 22.700 6.500H12l-4.800 8.300z" fill="#e33b2e" />
    <path d="M22.700 6.500A12 12 0 0 1 11.400 24l5.400-9.200L12 6.500z" fill="#fcc934" />
    <path d="M11.400 24A12 12 0 0 1 1.900 5.500l5.300 9.300h9.600z" fill="#1e9b4c" />
    <circle cx="12" cy="12" r="5.800" fill="#fff" />
    <circle cx="12" cy="12" r="4.500" fill="#3d7ff0" />
    {badge && (
      <>
        <circle cx="17.500" cy="18" r="7.500" fill={color} />
        <text x="17.500" y="21" textAnchor="middle" fontSize="8" fontWeight="700" fill="#fff">{badge}</text>
      </>
    )}
  </svg>
);

const EdgeIcon = () => (
  <svg width="24" height="24" viewBox="0 0 24 24">
    <circle cx="12" cy="12" r="12" fill="#0f6fc0" />
    <path d="M.2 10C2-3 24-3 24 11c0 5-5 6-9 5-2-1-1-2 0-4 0-6-10-7-14.800-2z" fill="#35c1d8" />
    <path d="M17 1c5 2 7 6 7 10 0 5-5 6-9 5-2-1-1-2 0-4C20 10 20 5 17 1z" fill="#5fd873" />
    <path d="M9 12c0-3 5-3 6 0-1 2-2 3 0 4 3 1 6 .5 8-1-2 4-12 5-14-3z" fill="#1e1e1e" />
    <path d="M0 16h12v8H0z" fill="#d97a00" />
    <path d="M0 19h12v1H0z" fill="#8a4b00" />
    <path d="M5 18.500h2v2H5z" fill="#ffe04a" />
  </svg>
);

const StudioIcon = () => (
  <svg width="24" height="24" viewBox="0 0 24 24">
    <path d="M0 0h24v24H0z" fill="#0a63dc" />
    <path d="M24 4v20H4z" fill="#1e8cf0" />
    <path d="M9 5C5 6.500 5.500 11 9 12.500l3 1.300M13.500 9l1.500.8c4 2 4 7-1 8.700" fill="none" stroke="#fff" strokeWidth="2.400" strokeLinecap="round" />
    <circle cx="15.500" cy="5" r="1.500" fill="#fff" />
    <circle cx="9" cy="18.500" r="1.500" fill="#fff" />
  </svg>
);

const NotepadIcon = () => (
  <svg width="24" height="24" viewBox="0 0 24 24">
    <path d="M20 2l3 16-4 4z" fill="#8a6a3c" />
    <path d="M16 3l5 0-1 19-9-3z" fill="#e6ebee" />
    <path d="M7 3h13l-7 16L1 16z" fill="#6fb9cc" />
    <path d="M7 3h13l-2 4L6 6z" fill="#c9e6ee" />
  </svg>
);

const apps = [
  { name: 'File Explorer', icon: <ExplorerAppIcon />, state: 'open' },
  { name: 'Microsoft Store', icon: <StoreIcon />, state: 'closed' },
  { name: 'Eclipse', icon: <EclipseIcon />, state: 'closed' },
  { name: 'Chrome', icon: <ChromeIcon />, state: 'closed' },
  { name: 'Edge', icon: <EdgeIcon />, state: 'closed' },
  { name: 'UiPath Studio', icon: <StudioIcon />, state: 'active' },
  { name: 'Chrome profile 1', icon: <ChromeIcon badge="V" color="#5d4037" />, state: 'open' },
  { name: 'Chrome profile 2', icon: <ChromeIcon badge="V" color="#5c6bc0" />, state: 'open' },
  { name: 'Notepad', icon: <NotepadIcon />, state: 'open' },
];

const Taskbar = () => (
  <footer className="flex h-10 shrink-0 bg-[#1c1c1c] text-white">
    <button type="button" aria-label="Start" className="flex w-12 items-center justify-center">
      <svg width="16" height="16" viewBox="0 0 16 16" fill="#fff">
        <path d="M0 2.200l6.500-.9v6.200H0zM7.300 1.200L16 0v7.500H7.300zM0 8.300h6.500v6.200L0 13.600zM7.300 8.300H16V16l-8.700-1.200z" />
      </svg>
    </button>
    <label className="flex w-72 items-center border border-[#c4c4c4] bg-[#f2f2f2] pl-[11px] pr-[3px] text-[#3a3a3a]">
      <svg width="17" height="17" viewBox="0 0 17 17" fill="none" stroke="#222" strokeWidth="1.400">
        <circle cx="10.500" cy="6.500" r="5.500" />
        <path d="M6.500 10.500L1 16" />
      </svg>
      <input
        type="text"
        aria-label="Search"
        placeholder="Type here to search"
        className="ml-[11px] min-w-0 flex-1 bg-transparent pt-0.5 text-sm outline-none placeholder:text-[#3a3a3a]"
      />
      <span className="flex h-8 w-[72px] items-center justify-center rounded-md bg-[#e2e2e2]">
        <svg width="30" height="26" viewBox="0 0 30 26">
          <path d="M11 4V2.500Q11 1 12.500 1h5Q19 1 19 2.500V4" fill="none" stroke="#333" strokeWidth="2" />
          <path d="M0 4h30v20a1 1 0 0 1-1 1H1a1 1 0 0 1-1-1z" fill="#b76500" />
          <path d="M0 4h30v12H0z" fill="#ee8f05" />
          <path d="M0 15h30v1.500H0z" fill="#8f4b00" />
          <path d="M12.500 12.500h5v5h-5z" fill="#ffe11f" />
        </svg>
      </span>
    </label>
    <div className="flex gap-px">
      <button type="button" aria-label="Task view" className="flex w-[50px] items-center justify-center pr-0.5">
        <svg width="17" height="16" viewBox="0 0 17 16" fill="none" stroke="#fff" strokeWidth="1.200">
          <path d="M1 0v2.500h10V0M1 5h10v6H1zM1 16v-2.500h10V16M15 0v3.500M15 8.500V16" />
          <path d="M13.500 4.500h3v3h-3z" fill="#fff" stroke="none" />
        </svg>
      </button>
      {apps.map((app) => (
        <button
          key={app.name}
          type="button"
          aria-label={app.name}
          className={`flex w-12 flex-col items-center ${app.state === 'active' ? 'bg-[#4a4a4a]' : ''}`}
        >
          <span className="flex flex-1 items-center pt-0.5">{app.icon}</span>
          <span
            className={`h-0.5 ${app.state === 'closed' ? '' : 'bg-[#c9b274]'} ${app.state === 'active' ? 'w-full' : 'w-10'}`}
          />
        </button>
      ))}
    </div>
    <div className="ml-auto flex items-center pr-1">
      <button type="button" aria-label="Hidden icons"><ChevronUp size={18} strokeWidth={1.700} /></button>
      <svg className="ml-[9px]" width="14" height="14" viewBox="0 0 14 14" fill="none" stroke="#d8d8d8" strokeWidth="1.200">
        <path d="M1 13C1 6 6 1 13 1M4 13c0-5 4-9 9-9M7 13c0-3 3-6 6-6M10 13c0-2 1-3 3-3" />
        <circle cx="12.500" cy="12.500" r="1" fill="#fff" />
      </svg>
      <svg className="ml-2" width="16" height="10" viewBox="0 0 16 10" fill="none" stroke="#fff" strokeWidth="1.200">
        <path d="M.7 1h12.600v8H.7zM14.500 3v4" />
        <path d="M2.500 3h2v4h-2z" fill="#fff" />
      </svg>
      <svg className="ml-2" width="17" height="16" viewBox="0 0 17 16" fill="none" stroke="#fff" strokeWidth="1.300">
        <path d="M1 3l14-2v10M1 3v11h8M5 8c0-3 4-3 5-1V5M10 9c-1 2-4 2-5 0v2" />
        <circle cx="13" cy="12.500" r="3.500" fill="#ff9800" stroke="none" />
      </svg>
      <svg className="ml-[7px]" width="17" height="14" viewBox="0 0 17 14" fill="none" stroke="#fff" strokeWidth="1.200">
        <path d="M1 5h2l3-3v10L3 9H1zM8 5c1 1 1 3 0 4" />
        <path d="M10 3.500c2 2 2 5 0 7M12.500 2c3 3 3 7 0 10M15 .5c2 4 2 9 0 13" stroke="#808080" />
      </svg>
      <span className="ml-2">ENG</span>
      <time className="ml-[14px] text-center leading-[19px]">
        12:50
        <br />
        15-03-2024
      </time>
      <button type="button" aria-label="Notifications" className="ml-[18px] pt-1">
        <svg width="26" height="26" viewBox="0 0 26 26">
          <path d="M1 2h16v12H8l-4 4v-4H1z" fill="#fff" />
          <path d="M4 5.500h10M4 8.500h10M4 11.500h5" stroke="#1c1c1c" strokeWidth="1.200" />
          <circle cx="17" cy="17" r="7.800" fill="#3a3a3a" stroke="#8b8b8b" />
          <text x="17" y="21" textAnchor="middle" fontSize="11" fontWeight="600" fill="#fff">1</text>
        </svg>
      </button>
      <span className="ml-[10px] h-10 w-px bg-[#5a5a5a]" />
    </div>
  </footer>
);

export default function App() {
  return (
    <div className="flex h-screen flex-col overflow-hidden bg-[#2d2e32] font-['Open_Sans','Noto_Sans',sans-serif] text-[11px] leading-4">
      <TitleBar />
      <Ribbon />
      <div className="flex min-h-0 flex-1">
        <Rail tabs={leftTabs} side="left" />
        <Designer />
        <Rail tabs={rightTabs} side="right" />
      </div>
      <div className="flex h-[31px] shrink-0 items-end gap-[13px] pl-8 text-[#b8b8ba]">
        {['Output', 'Breakpoints', 'Error List'].map((name) => (
          <button key={name} type="button" className="border-b-[6px] border-[#45474b] pb-px leading-4">
            {name}
          </button>
        ))}
      </div>
      <StatusBar />
      <Taskbar />
    </div>
  );
}
